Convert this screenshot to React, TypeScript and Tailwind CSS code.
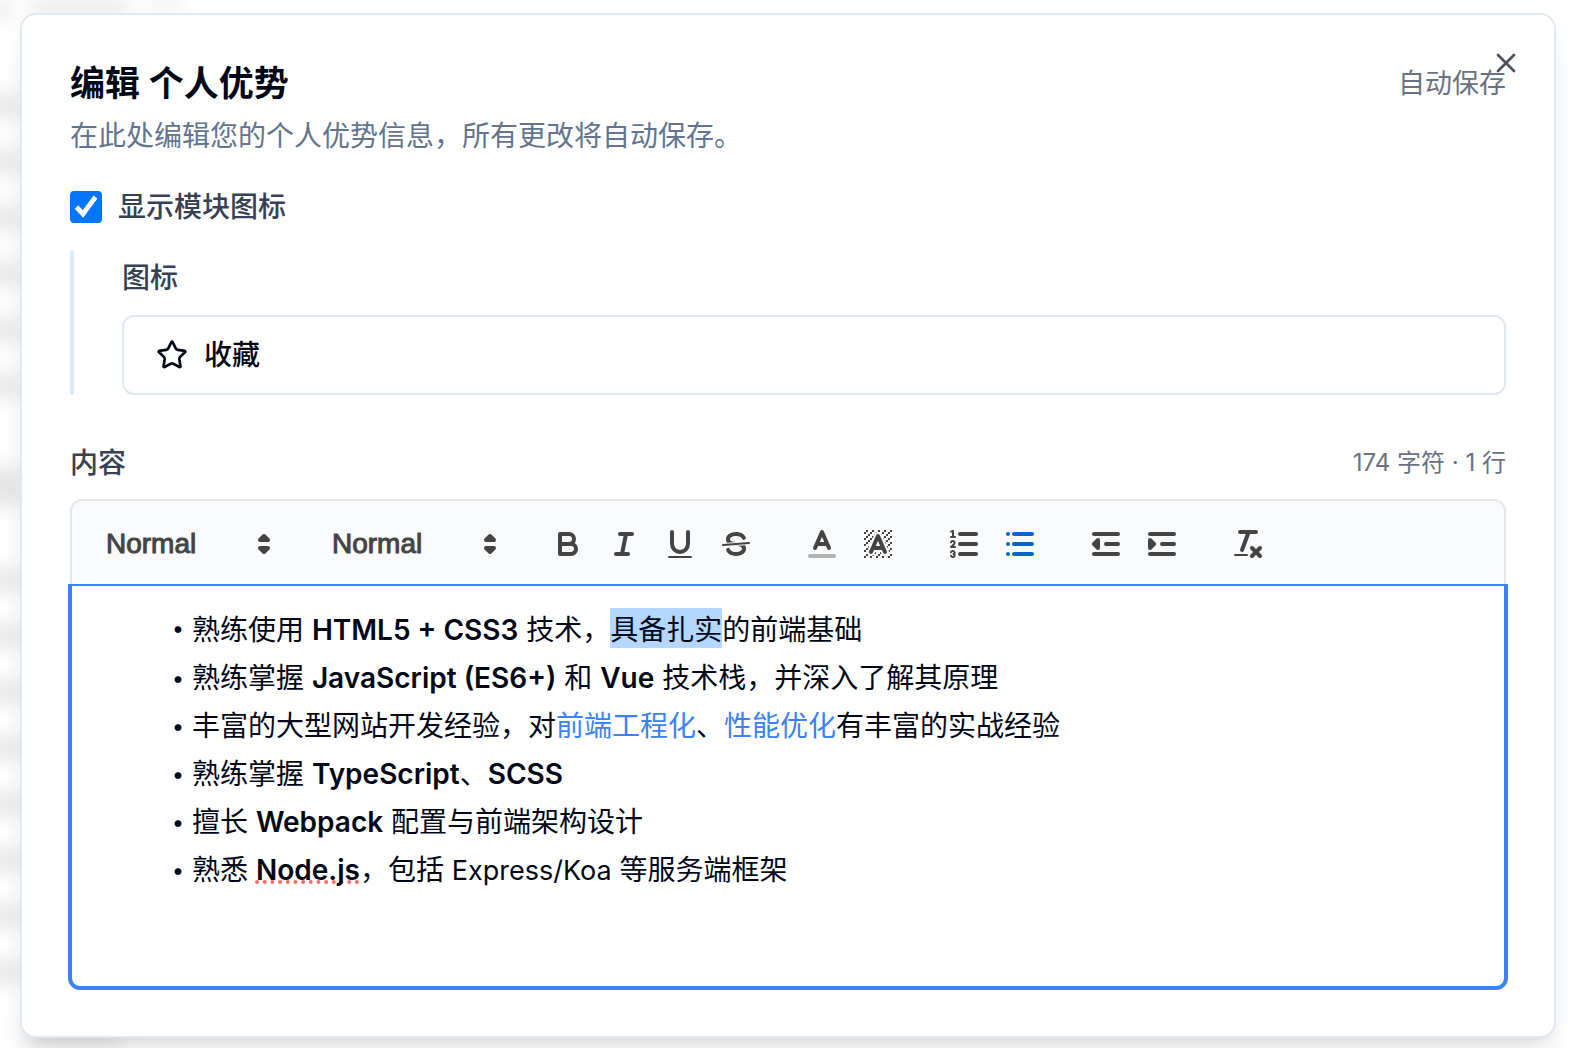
import { useState } from 'react';
import type { ReactNode } from 'react';
import { Star, X } from 'lucide-react';

const strokeProps = {
  fill: 'none',
  stroke: 'currentColor',
  strokeWidth: 2,
  strokeLinecap: 'round',
  strokeLinejoin: 'round',
} as const;

function Icon({ children }: { children: ReactNode }) {
  return (
    <svg viewBox="0 0 18 18" className="size-9" aria-hidden="true">
      {children}
    </svg>
  );
}

function BoldIcon() {
  return (
    <Icon>
      <g {...strokeProps}>
        <path d="M5,4H9.5A2.5,2.5,0,0,1,12,6.5v0A2.5,2.5,0,0,1,9.5,9H5Z" />
        <path d="M5,9h5.5A2.5,2.5,0,0,1,13,11.5v0A2.5,2.5,0,0,1,10.5,14H5Z" />
      </g>
    </Icon>
  );
}

function ItalicIcon() {
  return (
    <Icon>
      <path {...strokeProps} d="M7,4H13M5,14H11M8,14L10,4" />
    </Icon>
  );
}

function UnderlineIcon() {
  return (
    <Icon>
      <path {...strokeProps} d="M5,3V9a4.012,4.012,0,0,0,4,4H9a4.012,4.012,0,0,0,4-4V3" />
      <rect fill="currentColor" height="1" width="12" x="3" y="15" rx="0.5" />
    </Icon>
  );
}

function StrikeIcon() {
  return (
    <Icon>
      <path {...strokeProps} strokeWidth={1} d="M15.5,8.5L2.5,9.5" />
      <g fill="currentColor">
        <path d="M9.007,8C6.542,7.791,6,7.519,6,6.5,6,5.792,7.283,5,9,5c1.571,0,2.765.679,2.969,1.309a1,1,0,0,0,1.9-.617C13.356,4.106,11.354,3,9,3,6.2,3,4,4.538,4,6.5a3.2,3.2,0,0,0,.5,1.843Z" />
        <path d="M8.984,10C11.457,10.208,12,10.479,12,11.5c0,.708-1.283,1.5-3,1.5-1.571,0-2.765-.679-2.969-1.309a1,1,0,1,0-1.9.617C4.644,13.894,6.646,15,9,15c2.8,0,5-1.538,5-3.5a3.2,3.2,0,0,0-.5-1.843Z" />
      </g>
    </Icon>
  );
}

function ColorIcon() {
  return (
    <Icon>
      <path {...strokeProps} opacity="0.4" d="M3,15H15" />
      <path {...strokeProps} d="M5.5,11L9,3L12.5,11M11.63,9H6.38" />
    </Icon>
  );
}

// Unit squares that make up the hatching behind the letter
const hatchCells = [
  [4, 4], [2, 6], [3, 5], [4, 7], [2, 12], [2, 9], [2, 15], [3, 8], [12, 2], [11, 3],
  [2, 3], [6, 2], [3, 2], [5, 3], [9, 2], [15, 14], [13, 7], [15, 5], [14, 6], [15, 8],
  [14, 9], [14, 3], [15, 2], [12, 5], [13, 4], [9, 14], [8, 15], [5, 15], [11, 15],
  [14, 15], [15, 11],
];

function BackgroundIcon() {
  return (
    <Icon>
      <g fill="currentColor">
        {hatchCells.map(([x, y]) => (
          <rect key={`${x}-${y}`} x={x} y={y} width="1" height="1" />
        ))}
        <polygon points="6 6.868 6 6 5 6 5 7 5.942 7 6 6.868" />
        <polygon points="6.817 5 6 5 6 6 6.38 6 6.817 5" />
        <polygon points="4 11.439 4 11 3 11 3 12 3.755 12 4 11.439" />
        <polygon points="4.63 10 4 10 4 11 4.192 11 4.63 10" />
        <polygon points="13.447 10.174 13.808 11 14 11 14 10 13.37 10 13.447 10.174" />
        <polygon points="12 6.868 12 6 11.62 6 12 6.868" />
        <polygon points="12.933 9 13 9 13 8 12.495 8 12.933 9" />
        <path d="M10.832,4.2L11,4.582V4H10.708A1.948,1.948,0,0,1,10.832,4.2Z" />
        <path d="M7,4.582L7.168,4.2A1.929,1.929,0,0,1,7.292,4H7V4.582Z" />
        <path d="M8,13H7.683l-0.351.8a1.933,1.933,0,0,1-.124.2H8V13Z" />
        <path d="M9,3H8V3.282A1.985,1.985,0,0,1,9,3Z" />
        <path d="M3.775,14H3v1H4V14.314A1.97,1.97,0,0,1,3.775,14Z" />
        <path d="M6,14.926V15H7V14.316A1.993,1.993,0,0,1,6,14.926Z" />
        <path d="M10.668,13.8L10.317,13H10v1h0.792A1.947,1.947,0,0,1,10.668,13.8Z" />
        <path d="M14.332,12.2a1.99,1.99,0,0,1,.166.8H15V12H14.245Z" />
      </g>
      <path {...strokeProps} d="M5.5,13L9,5L12.5,13M11.63,11H6.38" />
    </Icon>
  );
}

function OrderedListIcon() {
  return (
    <Icon>
      <path {...strokeProps} d="M7,4H15M7,9H15M7,14H15" />
      <path
        fill="currentColor"
        d="M3.5,6A0.5,0.5,0,0,1,3,5.5V3.085l-0.276.138A0.5,0.5,0,0,1,2.053,3c-0.124-.247-0.023-0.324.224-0.447l1-.5A0.5,0.5,0,0,1,4,2.5v3A0.5,0.5,0,0,1,3.5,6Z"
      />
      <g {...strokeProps} strokeWidth={1}>
        <path d="M2.5,5.5H4.5" />
        <path d="M4.5,10.5h-2c0-.234,1.85-1.076,1.85-2.234A0.959,0.959,0,0,0,2.5,8.156" />
        <path d="M2.5,14.846a0.959,0.959,0,0,0,1.85-.109A0.7,0.7,0,0,0,3.75,14a0.688,0.688,0,0,0,.6-0.736,0.959,0.959,0,0,0-1.85-.109" />
      </g>
    </Icon>
  );
}

function BulletListIcon() {
  return (
    <Icon>
      <path {...strokeProps} d="M6,4H15M6,9H15M6,14H15M3,4H3M3,9H3M3,14H3" />
    </Icon>
  );
}

function OutdentIcon() {
  return (
    <Icon>
      <path {...strokeProps} d="M3,14H15M3,4H15M9,9H15" />
      <path {...strokeProps} fill="currentColor" d="M5,7V11L3,9Z" />
    </Icon>
  );
}

function IndentIcon() {
  return (
    <Icon>
      <path {...strokeProps} d="M3,14H15M3,4H15M9,9H15" />
      <path {...strokeProps} fill="currentColor" d="M3,7V11L5,9Z" />
    </Icon>
  );
}

function CleanIcon() {
  return (
    <Icon>
      <path {...strokeProps} d="M5,3H13M6,12L9.35,3M11,11L15,15M15,11L11,15" />
      <rect fill="currentColor" height="1" width="7" x="2" y="14" rx="0.5" />
    </Icon>
  );
}

const toolGroups = [
  [
    { label: '粗体', icon: <BoldIcon /> },
    { label: '斜体', icon: <ItalicIcon /> },
    { label: '下划线', icon: <UnderlineIcon /> },
    { label: '删除线', icon: <StrikeIcon /> },
  ],
  [
    { label: '文字颜色', icon: <ColorIcon /> },
    { label: '背景颜色', icon: <BackgroundIcon /> },
  ],
  [
    { label: '有序列表', icon: <OrderedListIcon /> },
    { label: '无序列表', icon: <BulletListIcon />, active: true },
  ],
  [
    { label: '减少缩进', icon: <OutdentIcon /> },
    { label: '增加缩进', icon: <IndentIcon /> },
  ],
  [{ label: '清除格式', icon: <CleanIcon /> }],
];

function Picker({ label, options }: { label: string; options: string[] }) {
  return (
    <div className="relative w-49">
      <select
        aria-label={label}
        className="h-12 w-full appearance-none bg-transparent pl-[18px] font-['Liberation_Sans',sans-serif] text-[28px] leading-12 text-[#444] outline-none [-webkit-text-stroke:1px_#444]"
      >
        {options.map((option) => (
          <option key={option}>{option}</option>
        ))}
      </select>
      <div className="pointer-events-none absolute top-1.5 right-0.5 text-[#444]">
        <Icon>
          <path {...strokeProps} fill="currentColor" d="M7,11L9,13L11,11Z" />
          <path {...strokeProps} fill="currentColor" d="M7,7L9,5L11,7Z" />
        </Icon>
      </div>
    </div>
  );
}

function Toolbar() {
  return (
    <div className="flex flex-wrap gap-x-[30px] rounded-t-xl border-2 border-b-0 border-gray-200 bg-gray-50 px-4 pt-[19px] pb-4">
      <Picker label="标题" options={['Normal', 'Heading 1', 'Heading 2']} />
      <Picker label="字号" options={['Normal', 'Small', 'Large', 'Huge']} />
      {toolGroups.map((group) => (
        <div key={group[0].label} className="flex">
          {group.map((tool) => (
            <button
              key={tool.label}
              type="button"
              aria-label={tool.label}
              className={`flex h-12 w-14 items-center justify-center ${
                'active' in tool && tool.active ? 'text-[#06c]' : 'text-[#444]'
              }`}
            >
              {tool.icon}
            </button>
          ))}
        </div>
      ))}
    </div>
  );
}

function Item({ children }: { children: ReactNode }) {
  return (
    <li className="flex">
      <span className="w-[34px] text-right text-[22px]">•</span>
      <div className="pl-2">{children}</div>
    </li>
  );
}

function Editor() {
  return (
    <div
      role="textbox"
      aria-label="内容"
      className="-mx-0.5 min-h-[406px] rounded-b-xl border-4 border-t-2 border-[#3b82f6] pt-[18px] pr-8 pb-5 pl-[78px] text-[28px] leading-12 text-[#020817]"
    >
      <ul>
        <Item>
          熟练使用 <strong className="font-semibold">HTML5 + CSS3</strong> 技术，
          <span className="bg-[#b3d7ff] font-['Noto_Sans_CJK_SC',sans-serif]">具备扎实</span>
          的前端基础
        </Item>
        <Item>
          熟练掌握 <strong className="font-semibold">JavaScript (ES6+)</strong> 和{' '}
          <strong className="font-semibold">Vue</strong> 技术栈，并深入了解其原理
        </Item>
        <Item>
          丰富的大型网站开发经验，对<span className="text-[#3b82f6]">前端工程化</span>、
          <span className="text-[#3b82f6]">性能优化</span>有丰富的实战经验
        </Item>
        <Item>
          熟练掌握 <strong className="font-semibold">TypeScript</strong>、
          <strong className="font-semibold">SCSS</strong>
        </Item>
        <Item>
          擅长 <strong className="font-semibold">Webpack</strong> 配置与前端架构设计
        </Item>
        <Item>
          熟悉{' '}
          <strong className="font-semibold underline decoration-[#ff6b6b] decoration-dotted decoration-4 underline-offset-0 [text-decoration-skip-ink:none]">
            Node.js
          </strong>
          ，包括 <span className="text-[27px]">Express/Koa</span> 等服务端框架
        </Item>
      </ul>
    </div>
  );
}

function PageLines({ count }: { count: number }) {
  return (
    <div className="flex flex-col gap-9">
      {Array.from({ length: count }, (_, index) => (
        <div key={index} className="h-5 w-12 bg-neutral-300" />
      ))}
    </div>
  );
}

// The page under the dialog, out of focus
function Backdrop() {
  return (
    <div aria-hidden="true" className="absolute inset-0 -left-6 flex flex-col opacity-60 blur-[10px]">
      <div className="flex gap-4">
        <div className="h-5 w-10 bg-neutral-200" />
        <div className="h-4 w-24 bg-neutral-300" />
        <div className="h-3 w-10 bg-neutral-200" />
      </div>
      <div className="mt-19">
        <PageLines count={6} />
      </div>
      <div className="mt-18 mb-16 h-10 w-12 bg-neutral-300" />
      <PageLines count={8} />
      <div className="mt-9 ml-12 h-8 w-24 bg-neutral-200" />
    </div>
  );
}

export default function App() {
  const [showIcon, setShowIcon] = useState(true);

  return (
    <div
      lang="zh-CN"
      className="relative min-h-screen overflow-hidden bg-white pt-[13px] pr-6 pb-[11px] pl-5 font-[Inter,'Noto_Sans_CJK_SC',sans-serif]"
    >
      <Backdrop />
      <div
        role="dialog"
        aria-labelledby="dialog-title"
        className="relative rounded-2xl border-2 border-slate-200 bg-white p-12 pb-[46px] shadow-[0_20px_30px_-6px_rgb(0_0_0/0.1),0_8px_12px_-8px_rgb(0_0_0/0.1)]"
      >
        <header className="flex justify-between">
          <div>
            <h2 id="dialog-title" className="text-[35px] leading-10 font-semibold text-[#020817]">
              编辑 个人优势
            </h2>
            <p className="mt-[13px] text-[28px] leading-10 text-slate-500">
              在此处编辑您的个人优势信息，所有更改将自动保存。
            </p>
          </div>
          <span className="pt-px text-[27px] leading-10 text-gray-500">自动保存</span>
        </header>
        <button type="button" aria-label="关闭" className="absolute top-8 right-8 text-[#020817] opacity-70">
          <X className="size-8" />
        </button>

        <label className="mt-[31px] flex items-center gap-4 text-[28px] leading-10 font-medium text-gray-700">
          <span className="relative size-8">
            <input
              type="checkbox"
              checked={showIcon}
              onChange={(event) => setShowIcon(event.target.checked)}
              className="block size-8 appearance-none rounded border-2 border-gray-400 checked:border-[#0075ff] checked:bg-[#0075ff]"
            />
            {showIcon && (
              <svg viewBox="0 0 32 32" className="pointer-events-none absolute inset-0 size-8 text-white">
                <path d="M6.5,16L13,23L25.5,6" fill="none" stroke="currentColor" strokeWidth="4.8" />
              </svg>
            )}
          </span>
          显示模块图标
        </label>

        <div className="mt-6 border-l-4 border-blue-100 pl-12">
          <div id="icon-label" className="pt-[7px] pb-[17px] text-[28px] leading-10 font-medium text-gray-700">
            图标
          </div>
          <button
            type="button"
            aria-labelledby="icon-label"
            className="flex h-20 w-full items-center gap-4 rounded-xl border-2 border-slate-200 px-8 text-[28px] font-medium text-[#020817]"
          >
            <Star className="size-8" />
            收藏
          </button>
        </div>

        <div className="mt-12 mb-4 flex items-center justify-between">
          <div className="text-[28px] leading-10 font-medium text-gray-700">内容</div>
          <div className="text-2xl text-gray-500">174 字符 · 1 行</div>
        </div>
        <Toolbar />
        <Editor />
      </div>
    </div>
  );
}
